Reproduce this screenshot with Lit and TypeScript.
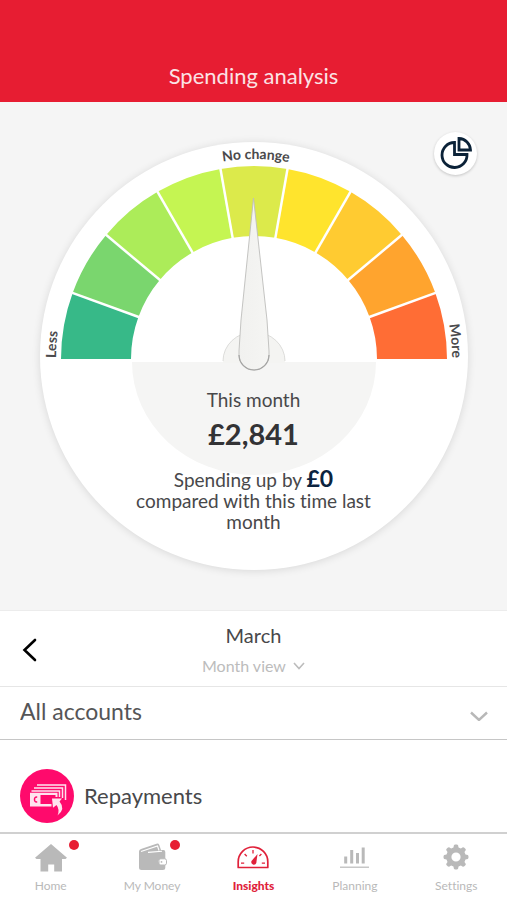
import { LitElement, html, svg, css } from "lit";
import { customElement, property } from "lit/decorators.js";
import { classMap } from "lit/directives/class-map.js";

const CX = 214;
const CY = 217;
const OUTER = 193;
const INNER = 123;

const SEGMENT_COLORS = [
  "#37b988",
  "#7ad66e",
  "#acec59",
  "#c5f552",
  "#dcea4b",
  "#ffe42d",
  "#ffcb31",
  "#ffa42e",
  "#ff6d35",
];

const point = (radius: number, degrees: number) => {
  const a = (degrees * Math.PI) / 180;
  return `${(CX - radius * Math.cos(a)).toFixed(2)} ${(CY - radius * Math.sin(a)).toFixed(2)}`;
};

const segmentPath = (index: number) => {
  const from = index * 20;
  const to = from + 20;
  return `M${point(OUTER, from)}A${OUTER} ${OUTER} 0 0 1 ${point(OUTER, to)}L${point(INNER, to)}A${INNER} ${INNER} 0 0 0 ${point(INNER, from)}Z`;
};

@customElement("spending-dial")
export class SpendingDial extends LitElement {
  @property() period = "";
  @property() total = "";
  @property() change = "";

  static styles = css`
    :host {
      display: grid;
      width: 428px;
      max-width: 100%;
      aspect-ratio: 1;
      border-radius: 50%;
      background: #fff;
      box-shadow: 0 1px 8px rgba(0, 0, 0, 0.12);
    }
    .gauge,
    .summary {
      grid-area: 1 / 1;
    }
    .gauge {
      width: 100%;
      height: auto;
      display: block;
    }
    .mark {
      font: 700 14px Lato, sans-serif;
      fill: #4a4a4c;
    }
    .summary {
      align-self: end;
      justify-self: center;
      width: 242px;
      padding-bottom: 38px;
      text-align: center;
      color: #48484a;
      font-size: 19px;
      line-height: 21px;
    }
    .summary p {
      margin: 0;
    }
    .summary .total {
      margin: 12px 0 22px;
      font-size: 29px;
      line-height: 24px;
      font-weight: 700;
      color: #333335;
    }
    .change {
      font-size: 23px;
      line-height: 20px;
      font-weight: 700;
      color: #0b2440;
    }
  `;

  render() {
    return html`
      <svg class="gauge" viewBox="0 0 428 428" aria-hidden="true">
        <defs>
          <path id="top" d="M13 218A201 201 0 0 1 415 218" />
          <path id="sides" d="M16 216A198 198 0 0 1 412 216" />
          <linearGradient id="needle" x1="0" x2="1" y1="0" y2="0">
            <stop offset="0" stop-color="#f1f1ef" />
            <stop offset="1" stop-color="#f5f5f3" />
          </linearGradient>
        </defs>
        <path d="M92 220H336A122 113 0 0 1 92 220Z" fill="#f5f5f4" />
        ${SEGMENT_COLORS.map(
          (color, i) => svg`<path d=${segmentPath(i)} fill=${color} />`,
        )}
        ${SEGMENT_COLORS.slice(1).map(
          (_, i) => svg`<path d=${`M${point(OUTER + 1, (i + 1) * 20)}L${point(INNER - 1, (i + 1) * 20)}`} stroke="#fff" stroke-width="2.5" />`,
        )}
        <path d="M183 221V219A31 29 0 0 1 245 219V221Z" fill="#f4f4f2" />
        <path d="M183 219A31 29 0 0 1 245 219" fill="none" stroke="#d4d4d2" stroke-width="0.8" />
        <path d="M213.500 56L227 178L229 209V213A15 15 0 0 1 199 213V209L201 178Z" fill="url(#needle)" stroke="#bdbdbb" stroke-width="0.9" />
        <path d="M199 213A15 15 0 0 0 229 213" fill="none" stroke="#a4a4a3" stroke-width="1.200" />
        <text class="mark" text-anchor="middle"><textPath href="#top" startOffset="50.300%">No change</textPath></text>
        <text class="mark" text-anchor="start"><textPath href="#sides" startOffset="0">Less</textPath></text>
        <text class="mark" text-anchor="end"><textPath href="#sides" startOffset="100%">More</textPath></text>
      </svg>
      <div class="summary">
        <p>${this.period}</p>
        <p class="total">${this.total}</p>
        <p>
          Spending up by <span class="change">${this.change}</span> compared
          with this time last month
        </p>
      </div>
    `;
  }
}

const gearPath = () => {
  const pts: string[] = [];
  for (let i = 0; i < 8; i++) {
    for (const [r, d] of [[9.8, -15], [12, -10], [12.5, -5], [12.5, 5], [12, 10], [9.8, 15]]) {
      const a = ((i * 45 + d) * Math.PI) / 180;
      pts.push(`${(16 + r * Math.sin(a)).toFixed(2)} ${(15 - r * Math.cos(a)).toFixed(2)}`);
    }
  }
  return `M${pts.join("L")}ZM16 10.400a4.600 4.600 0 1 0 0 9.200a4.600 4.600 0 1 0 0-9.200Z`;
};

const ICONS = {
  home: svg`<path fill="currentColor" d="M16 2L32 15.700L30.500 17H27V29.500H19.200V22.500H13.200V29.500H5.500V17H1.500L0 15.700Z" />`,
  wallet: svg`
    <path fill="currentColor" d="M3 9.500Q3 7.800 5 7L20.500 1.700Q22.500 1.100 23.300 2.900L25 8H27.500Q29.300 8 29.300 10V17H25Q22.500 17 22.500 19.500T25 22.500H29.300V25.500Q29.300 28 26.800 28H5.500Q3 28 3 25.500Z" />
    <path fill="none" stroke="#fff" stroke-width="1.100" d="M5 9.600L21.500 4L23 8.500M12 10.400L26 9.200" />
    <rect x="23" y="16.800" width="7.500" height="6.200" rx="1.800" fill="#fff" stroke="currentColor" stroke-width="1" />
    <circle cx="25.500" cy="19.900" r="0.900" fill="currentColor" />`,
  insights: svg`
    <path fill="none" stroke="currentColor" stroke-width="1.700" stroke-linejoin="round" d="M1.200 25.500V19.800A14.800 14.800 0 0 1 30.800 19.800V25.500Z" />
    <path fill="none" stroke="currentColor" stroke-width="1.300" d="M16 8V11.500M7.600 12L9.800 14.300M24.400 12L22.400 14M4 21.200H7.200M24.800 21.200H28" />
    <path fill="currentColor" d="M20.500 12L19.300 21A2.500 2.500 0 1 1 14.500 19.100Z" />`,
  planning: svg`
    <path fill="none" stroke="currentColor" stroke-width="3" d="M6.700 21.500V14.500M12.700 21.500V8M18.500 21.500V11M24.200 21.500V5.500" />
    <path stroke="currentColor" stroke-width="1.200" d="M1 25.200H30" />`,
  settings: svg`<path fill="currentColor" fill-rule="evenodd" d=${gearPath()} />`,
};

const TABS: { label: string; icon: keyof typeof ICONS; badge?: boolean; active?: boolean }[] = [
  { label: "Home", icon: "home", badge: true },
  { label: "My Money", icon: "wallet", badge: true },
  { label: "Insights", icon: "insights", active: true },
  { label: "Planning", icon: "planning" },
  { label: "Settings", icon: "settings" },
];

@customElement("tab-bar")
export class TabBar extends LitElement {
  static styles = css`
    :host {
      display: block;
      border-top: 2px solid #d0d0d0;
      background: #fff;
    }
    .tabs {
      display: grid;
      grid-template-columns: repeat(5, 1fr);
    }
    .tab {
      display: flex;
      flex-direction: column;
      align-items: center;
      gap: 4px;
      padding: 8px 0 6px;
      color: #b9b9b9;
      font-size: 12px;
      line-height: 16px;
      text-decoration: none;
    }
    .active {
      color: #e0213a;
      font-weight: 900;
    }
    .glyph {
      position: relative;
      display: block;
      width: 32px;
      height: 32px;
    }
    .badge {
      position: absolute;
      top: -2px;
      right: -12px;
      width: 10px;
      height: 10px;
      border-radius: 50%;
      background: #e71d32;
    }
  `;

  render() {
    return html`<nav class="tabs">
      ${TABS.map(
        (t) => html`<a href="#${t.icon}" class=${classMap({ tab: true, active: !!t.active })}>
          <span class="glyph">
            <svg viewBox="0 0 32 32" width="32" height="32" aria-hidden="true">${ICONS[t.icon]}</svg>
            ${t.badge ? html`<span class="badge"></span>` : null}
          </span>
          ${t.label}
        </a>`,
      )}
    </nav>`;
  }
}

@customElement("app-root")
export class AppRoot extends LitElement {
  static styles = css`
    :host {
      display: flex;
      flex-direction: column;
      min-height: 100vh;
      background: #fff;
      color: #48484a;
      font-family: Lato, sans-serif;
      font-variant-ligatures: none;
    }
    button,
    select {
      appearance: none;
      margin: 0;
      padding: 0;
      border: 0;
      background: none;
      font: inherit;
      color: inherit;
    }
    .header {
      padding: 62px 16px 12px;
      background: #e71d32;
      color: #fbe3e5;
      text-align: center;
    }
    .title {
      margin: 0;
      font-size: 22px;
      line-height: 28px;
      font-weight: 400;
    }
    .overview {
      position: relative;
      display: flex;
      justify-content: center;
      padding: 40px 0;
      background: #f5f5f5;
      border-bottom: 1px solid #ececec;
    }
    .chart-button {
      position: absolute;
      top: 30px;
      right: 30px;
      width: 43px;
      height: 43px;
      border-radius: 50%;
      background: #fff;
      box-shadow: 0 1px 3px rgba(0, 0, 0, 0.2);
    }
    .chart-button svg,
    .back svg {
      display: block;
    }
    .month {
      display: grid;
      grid-template-columns: 60px 1fr 60px;
      align-items: center;
      padding: 12px 0 10px;
      border-bottom: 1px solid #e6e6e6;
    }
    .back {
      justify-self: center;
      color: #000;
    }
    .period {
      display: flex;
      flex-direction: column;
      align-items: center;
      gap: 9px;
    }
    .name {
      margin: 0;
      font-size: 20px;
      line-height: 24px;
      font-weight: 400;
    }
    .view {
      display: flex;
      align-items: center;
      gap: 6px;
      color: #bcbcbc;
      font-size: 16px;
      line-height: 20px;
    }
    .accounts {
      display: flex;
      align-items: center;
      padding: 10px 18px 14px 20px;
      border-bottom: 1px solid #c6c6c6;
      color: #555557;
      font-size: 23px;
      line-height: 28px;
    }
    .accounts select {
      flex: 1;
    }
    .accounts svg {
      color: #b8b8b8;
    }
    .categories {
      flex: 1;
      margin: 0;
      padding: 29px 20px 8px;
      list-style: none;
    }
    .category {
      display: flex;
      align-items: center;
      gap: 10px;
      font-size: 22px;
      line-height: 28px;
    }
  `;

  render() {
    return html`
      <header class="header"><h1 class="title">Spending analysis</h1></header>
      <section class="overview">
        <spending-dial period="This month" total="£2,841" change="£0"></spending-dial>
        <button class="chart-button" aria-label="Chart">
          <svg viewBox="0 0 43 43" width="43" height="43" fill="none" stroke="#0b2238" stroke-width="2.800" stroke-linejoin="miter">
            <path d="M20.500 10.500A12.500 12.500 0 1 0 33 22.500H20.500Z" />
            <path d="M25 6.500A12 12 0 0 1 36.500 18H25Z" />
          </svg>
        </button>
      </section>
      <section class="month">
        <button class="back" aria-label="Back">
          <svg viewBox="0 0 16 24" width="16" height="24" fill="none" stroke="currentColor" stroke-width="2.600" stroke-linecap="round">
            <path d="M13 2L2.500 12L13 22" />
          </svg>
        </button>
        <div class="period">
          <h2 class="name">March</h2>
          <div class="view">
            <select aria-label="View"><option>Month view</option></select>
            <svg viewBox="0 0 12 8" width="12" height="8" fill="none" stroke="currentColor" stroke-width="1.600">
              <path d="M1 1L6 6.500L11 1" />
            </svg>
          </div>
        </div>
      </section>
      <div class="accounts">
        <select aria-label="Accounts"><option>All accounts</option></select>
        <svg viewBox="0 0 20 20" width="20" height="20" fill="none" stroke="currentColor" stroke-width="2.400">
          <path d="M2 11.500L10 19L18 11.500" />
        </svg>
      </div>
      <ul class="categories">
        <li class="category">
          <svg viewBox="0 0 54 54" width="54" height="54" aria-hidden="true">
            <circle cx="27" cy="27" r="27" fill="#ff0a6c" />
            <g fill="none" stroke="#ffe3ee" stroke-width="1.500">
              <path d="M17 16H45.500V31" />
              <path d="M14 19H42.500V29" />
              <path d="M11.500 22H39.500V28" />
            </g>
            <path fill="#ffe3ee" fill-rule="evenodd" d="M10 23.800H37.500V28H35.500V26H20.500V35H31.500V37.500H10Z" />
            <path fill="none" stroke="#ff0a6c" stroke-width="1.500" d="M17.200 28.200Q14.500 27.600 14.500 30.500T17.200 32.800" />
            <path fill="#ffe3ee" d="M32 29.500H42L39.500 32.500Q46 40 37.500 46.500Q40 40.500 36.500 36L33 38.800Z" />
          </svg>
          <span>Repayments</span>
        </li>
      </ul>
      <tab-bar></tab-bar>
    `;
  }
}
